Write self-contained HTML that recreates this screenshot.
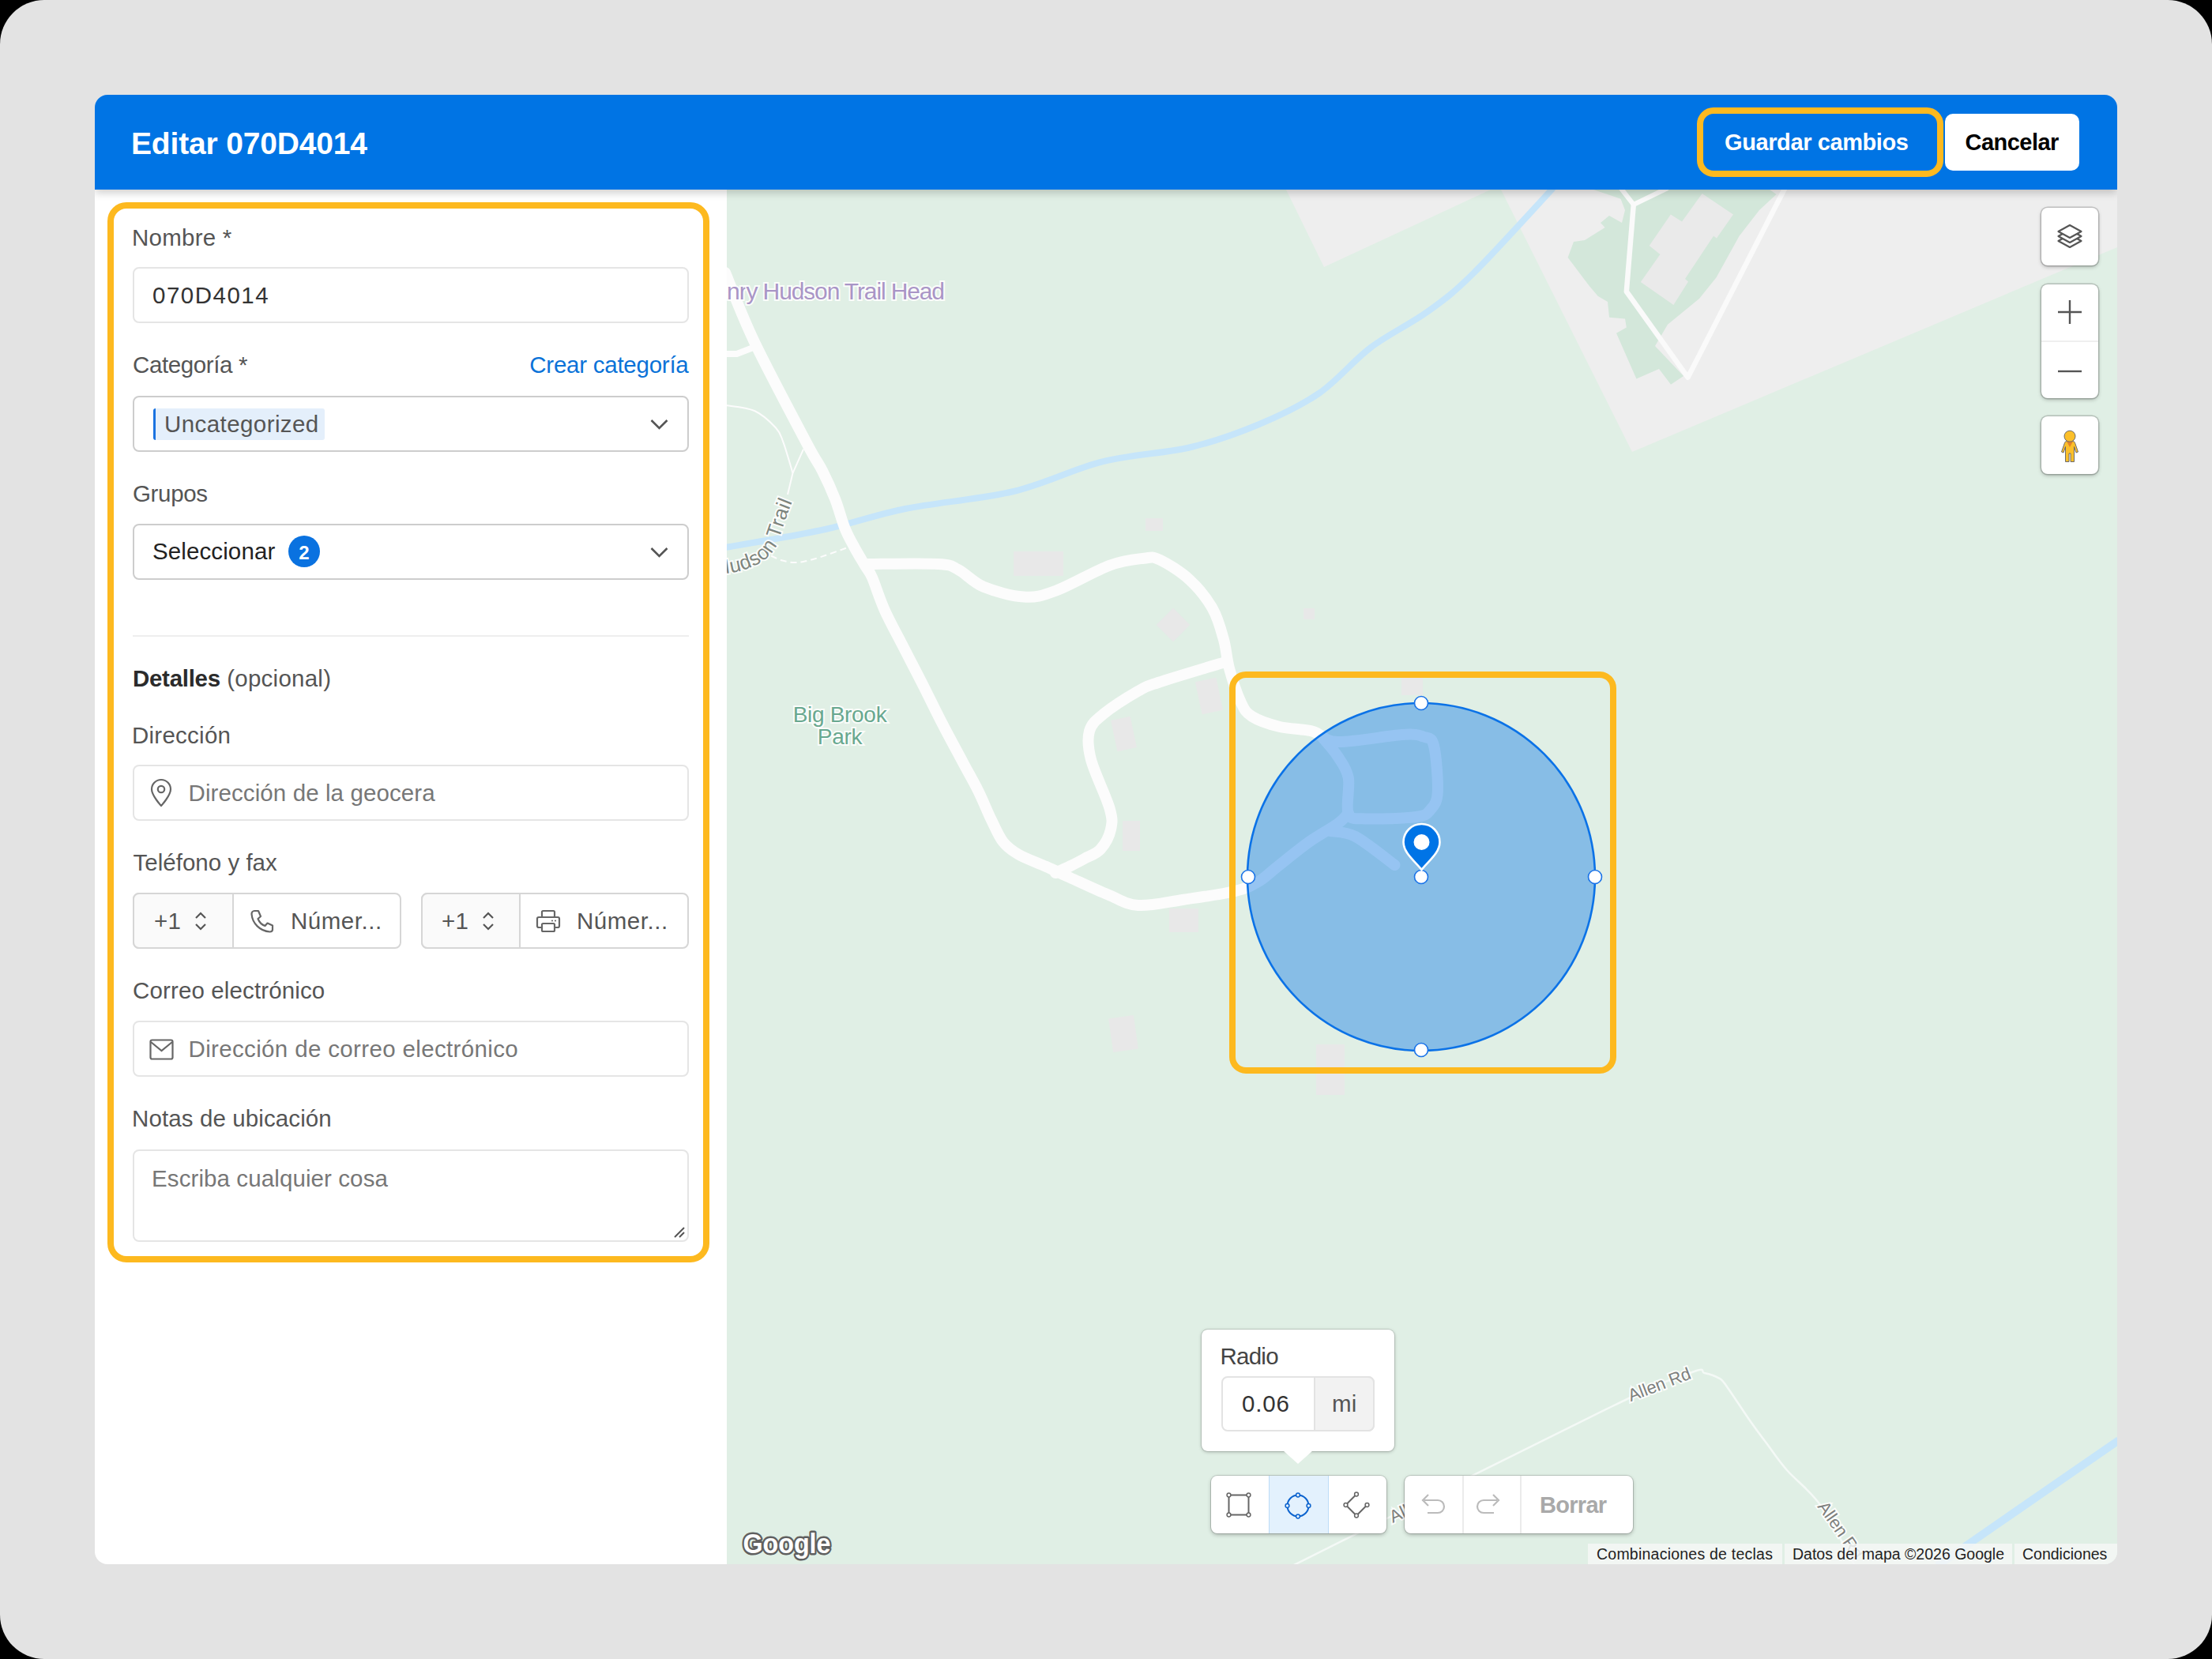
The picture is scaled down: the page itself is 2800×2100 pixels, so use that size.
<!DOCTYPE html>
<html><head><meta charset="utf-8"><style>
html,body{margin:0;padding:0;width:2800px;height:2100px;overflow:hidden;background:#000;}
body{font-family:"Liberation Sans",sans-serif;}
.frame{position:absolute;left:0;top:0;width:2800px;height:2100px;border-radius:56px;background:#e3e3e3;overflow:hidden;}
.dlg{position:absolute;left:120px;top:120px;width:2560px;height:1860px;border-radius:16px;background:#fff;overflow:hidden;}
.inner{position:absolute;left:-120px;top:-120px;width:2800px;height:2100px;}
.t{position:absolute;white-space:nowrap;}
</style></head><body>
<div class="frame">
<div class="dlg"><div class="inner">
<svg style="position:absolute;left:920px;top:240px" width="1760" height="1740" viewBox="920 240 1760 1740"><rect x="920" y="240" width="1760" height="1740" fill="#e0efe5"/><polygon points="1628,240 1676,338 1887,240" fill="#eeeeee"/><polygon points="1900,240 2066,572 2680,313 2680,240" fill="#eeeeee"/><polygon points="2017,240 2051.5,251.7 2057,266 2053,282 2037,273 2026,282 2031.6,288 2006,304 1992,306 1984.6,326 2011.8,362 2022.6,374.7 2035,382 2037,401.8 2057,403.6 2058.8,414.4 2046,421.7 2071.4,479.5 2100,467 2115,486.8 2131,476 2095,438 2111,410.8 2151,378 2172.7,351 2201.6,298.7 2227,266 2248.6,246 2240,240" fill="#d3e7da"/><polygon points="2154.6,245 2194,271.6 2173,301.6 2169,298.7 2133,353 2137,356.6 2118.4,386 2076.8,357 2101.4,322 2087.7,311 2114.8,271.6 2129,280.6" fill="#eaeaea"/><path d="M2051.5 238 L2067.8 259 L2111 238" fill="none" stroke="#fafafa" stroke-width="6" stroke-linejoin="round"/><path d="M2067.8 259 L2058.8 369 L2136.5 477.7 L2259.5 238" fill="none" stroke="#fafafa" stroke-width="6.5" stroke-linejoin="round"/><path d="M918 693 C939.1 689.2 1006.7 678.2 1044.7 670 C1082.7 661.8 1106.3 652.0 1146 644 C1185.7 636.0 1241.4 631.9 1283 622 C1324.6 612.1 1358.1 593.7 1395.5 584.4 C1432.9 575.1 1474.5 573.9 1507.6 566 C1540.7 558.1 1566.9 548.4 1594 537 C1621.1 525.6 1646.5 513.8 1670 497.6 C1693.5 481.4 1712.2 457.2 1735 440 C1757.8 422.8 1785.3 410.3 1807 394.6 C1828.7 378.9 1838.5 372.1 1865 346 C1891.5 319.9 1949.2 256.0 1966 238" fill="none" stroke="#c6e5fa" stroke-width="8" stroke-linejoin="round"/><path d="M2452 1982 L2682 1823" fill="none" stroke="#c6e5fa" stroke-width="10"/><rect x="1283" y="698" width="63" height="31" fill="#e8e8e8" transform="rotate(0 1314.5 713.5)"/><rect x="1450" y="656" width="22" height="16" fill="#e8e8e8" transform="rotate(0 1461.0 664.0)"/><rect x="1650" y="770" width="14" height="14" fill="#e8e8e8" transform="rotate(0 1657.0 777.0)"/><rect x="1410" y="909" width="25" height="40" fill="#e8e8e8" transform="rotate(-12 1422.5 929.0)"/><rect x="1517" y="860" width="27" height="42" fill="#e8e8e8" transform="rotate(-12 1530.5 881.0)"/><rect x="1421" y="1039" width="22" height="38" fill="#e8e8e8" transform="rotate(0 1432.0 1058.0)"/><rect x="1480" y="1150" width="37" height="30" fill="#e8e8e8" transform="rotate(0 1498.5 1165.0)"/><rect x="1406" y="1287" width="32" height="43" fill="#e8e8e8" transform="rotate(-8 1422.0 1308.5)"/><rect x="1666" y="1322" width="36" height="64" fill="#e8e8e8" transform="rotate(0 1684.0 1354.0)"/><rect x="1774" y="858" width="27" height="22" fill="#e8e8e8" transform="rotate(0 1787.5 869.0)"/><rect x="1470" y="776" width="30" height="30" fill="#e8e8e8" transform="rotate(45 1485 791)"/><path d="M918 345 C924.2 359.7 937.9 397.2 955 433 C972.1 468.8 1006.3 532.8 1020.6 560 C1034.9 587.2 1034.9 584.0 1041 596 C1047.1 608.0 1052.6 620.2 1057.3 632.3 C1062.0 644.4 1065.4 658.5 1069.4 668.5 C1073.4 678.5 1077.1 684.7 1081.4 692.6 C1085.7 700.5 1091.2 709.6 1095 716 C1098.8 722.4 1099.9 721.6 1104 731 C1108.1 740.4 1113.1 757.4 1119.8 772.3 C1126.5 787.2 1136.2 804.5 1144.4 820.6 C1152.6 836.7 1161.1 852.7 1169.2 868.8 C1177.3 884.9 1185.0 900.9 1193.3 917 C1201.6 933.1 1211.5 951.1 1219 965.2 C1226.5 979.3 1232.4 989.3 1238.4 1001.4 C1244.4 1013.5 1249.5 1026.8 1254.8 1037.6 C1260.1 1048.4 1264.1 1058.6 1270 1066 C1275.9 1073.4 1280.9 1076.8 1290 1082 C1299.1 1087.2 1313.7 1092.2 1324.4 1097 C1335.2 1101.8 1341.5 1105.1 1354.5 1111 C1367.5 1116.9 1388.3 1126.8 1402.7 1132.6 C1417.1 1138.4 1424.7 1145.0 1440.7 1146 C1456.7 1147.0 1478.0 1141.7 1498.5 1138.7 C1519.0 1135.7 1547.7 1131.9 1563.6 1128 C1579.5 1124.1 1585.0 1120.6 1593.8 1115.5 C1602.6 1110.4 1605.9 1105.8 1616.4 1097.5 C1626.9 1089.2 1644.2 1074.9 1657 1065.8 C1669.8 1056.7 1684.7 1049.0 1693 1043 C1701.3 1037.0 1704.5 1031.9 1706.8 1029.7" fill="none" stroke="#fcfcfc" stroke-width="14" stroke-linejoin="round" stroke-linecap="round"/><path d="M1099 714 C1113.8 714.0 1168.6 712.8 1187.6 714 C1206.6 715.2 1203.3 716.2 1212.9 721 C1222.5 725.8 1231.2 737.0 1245 742.8 C1258.8 748.5 1280.9 754.6 1296 755.5 C1311.1 756.4 1317.7 754.6 1335.8 748 C1353.9 741.4 1385.8 722.6 1404.5 715.7 C1423.2 708.8 1437.5 707.9 1448 706.7 C1458.5 705.5 1458.2 704.0 1467.8 708.5 C1477.4 713.0 1494.5 723.5 1505.7 733.8 C1516.9 744.0 1527.5 757.4 1534.7 770 C1541.9 782.6 1545.5 797.0 1549 809.7 C1552.5 822.4 1552.4 832.8 1556 846 C1559.6 859.2 1566.0 878.8 1570.8 889 C1575.6 899.2 1576.8 901.8 1585 907 C1593.2 912.2 1607.2 916.9 1620 920 C1632.8 923.1 1649.4 922.5 1661.6 925.7 C1673.8 928.9 1674.2 938.3 1693 939 C1711.8 939.7 1756.5 931.1 1774.6 930 C1792.7 928.9 1795.0 930.2 1801.7 932.5 C1808.4 934.8 1812.0 932.1 1815 943.8 C1818.0 955.5 1820.5 989.0 1819.8 1002.5 C1819.1 1016.0 1815.2 1019.8 1810.7 1025 C1806.2 1030.2 1806.3 1032.1 1792.7 1034 C1779.1 1035.9 1743.3 1037.1 1729 1036.4 C1714.7 1035.7 1710.5 1038.4 1706.8 1029.7 C1703.1 1021.1 1709.1 996.6 1706.8 984.5 C1704.5 972.4 1698.3 965.3 1693 957 C1687.7 948.7 1678.0 938.4 1675 934.7" fill="none" stroke="#fcfcfc" stroke-width="14" stroke-linejoin="round" stroke-linecap="round"/><path d="M1549 838.6 C1535.2 842.8 1484.0 858.0 1466 864 C1448.0 870.0 1452.2 868.2 1440.7 874.8 C1429.2 881.4 1407.3 895.3 1397 903.7 C1386.7 912.1 1381.7 915.8 1379 925.4 C1376.3 935.0 1376.8 945.3 1381 961.6 C1385.2 977.9 1400.3 1008.3 1404.5 1023 C1408.7 1037.7 1407.9 1041.3 1406 1050 C1404.1 1058.7 1398.6 1068.8 1393 1075 C1387.4 1081.2 1379.0 1083.4 1372.6 1087 C1366.2 1090.6 1360.6 1093.4 1354.5 1096.4 C1348.4 1099.4 1339.1 1103.6 1336 1105" fill="none" stroke="#fcfcfc" stroke-width="14" stroke-linejoin="round" stroke-linecap="round"/><path d="M1684 1052 C1689.3 1053.2 1702.2 1051.8 1715.8 1059 C1729.4 1066.2 1757.2 1089.0 1765.5 1095" fill="none" stroke="#fcfcfc" stroke-width="14" stroke-linejoin="round" stroke-linecap="round"/><path d="M918 448 L932.6 448 L952 440.5" fill="none" stroke="#fcfcfc" stroke-width="8"/><path d="M918 512.9 C924.2 514.1 944.3 515.2 955 520 C965.7 524.8 975.9 534.9 982 541.5 C988.1 548.1 987.8 550.1 991.4 559.6 C995.0 569.1 1001.5 592.3 1003.5 598.8" fill="none" stroke="#fcfcfc" stroke-width="2"/><path d="M1017 568.6 L1003.5 598.8 L997 626" fill="none" stroke="#fcfcfc" stroke-width="2"/><path d="M976 703.5 C978.4 704.5 985.0 708.1 990.4 709.5 C995.8 710.9 1001.5 712.4 1008.5 712 C1015.5 711.6 1021.3 710.3 1032.6 707 C1043.8 703.7 1068.8 694.5 1076 692" fill="none" stroke="#fcfcfc" stroke-width="2" stroke-dasharray="8 5"/><path d="M1636 1982 C1703.3 1948.4 1955.7 1821.3 2040 1780.5 C2124.3 1739.7 2122.4 1744.1 2142 1737 C2161.6 1729.9 2151.9 1736.8 2157.5 1738 C2163.1 1739.2 2171.1 1741.8 2175.6 1744.4 C2180.1 1747.0 2177.9 1744.1 2184.7 1753.4 C2191.5 1762.7 2207.6 1787.6 2216.3 1800 C2225.0 1812.4 2229.4 1817.8 2237 1828 C2244.6 1838.2 2250.7 1848.0 2262 1861 C2273.3 1874.0 2290.7 1885.8 2305 1906 C2319.3 1926.2 2340.8 1969.3 2348 1982" fill="none" stroke="#f4f9f6" stroke-width="2.5"/><text x="884" y="378.7" font-size="30" font-family="Liberation Sans" font-weight="400" fill="#a995c6" stroke="#fff" stroke-width="4" stroke-opacity="0.85" paint-order="stroke" text-anchor="start" letter-spacing="0" textLength="312" lengthAdjust="spacing">Henry Hudson Trail Head</text><text x="1063" y="914" font-size="28" font-family="Liberation Sans" font-weight="400" fill="#68a88f" stroke="#fff" stroke-width="4" stroke-opacity="0.85" paint-order="stroke" text-anchor="middle" letter-spacing="-0.3">Big Brook</text><text x="1063" y="941.7" font-size="28" font-family="Liberation Sans" font-weight="400" fill="#68a88f" stroke="#fff" stroke-width="4" stroke-opacity="0.85" paint-order="stroke" text-anchor="middle" letter-spacing="-0.3">Park</text><path id="htp" d="M880.7 730.5 C884.1 730.1 892.9 729.4 900.9 728.4 C908.9 727.4 921.3 725.8 928.7 724.4 C936.1 723.0 939.7 722.1 945.2 720.1 C950.7 718.1 957.0 715.4 961.9 712.4 C966.8 709.4 971.2 705.9 974.7 702.2 C978.2 698.5 981.0 694.5 983.2 690.4 C985.4 686.3 986.1 682.1 987.7 677.4 C989.3 672.7 991.1 667.4 992.8 662.4 C994.5 657.4 996.2 652.2 997.9 647.6 C999.6 643.0 1002.1 636.9 1003.0 634.7" fill="none"/><text font-size="25.5" font-family="Liberation Sans" fill="#7d847d" stroke="#fff" stroke-width="4" stroke-opacity="0.85" paint-order="stroke" letter-spacing="0.4"><textPath href="#htp" startOffset="100%" text-anchor="end">Hudson Trail</textPath></text><text x="2142" y="1744.5" font-size="22" font-family="Liberation Sans" font-weight="400" fill="#7d7f7d" stroke="#fff" stroke-width="4" stroke-opacity="0.85" paint-order="stroke" text-anchor="end" letter-spacing="0" transform="rotate(-21 2142 1744.5)">Allen Rd</text><text x="2300" y="1907" font-size="22" font-family="Liberation Sans" font-weight="400" fill="#7d7f7d" stroke="#fff" stroke-width="4" stroke-opacity="0.85" paint-order="stroke" text-anchor="start" letter-spacing="0" transform="rotate(55 2300 1907)">Allen Rd</text><text x="1763" y="1928" font-size="22" font-family="Liberation Sans" font-weight="400" fill="#7d7f7d" stroke="#fff" stroke-width="4" stroke-opacity="0.85" paint-order="stroke" text-anchor="start" letter-spacing="0" transform="rotate(-25 1763 1928)">Allen Rd</text><circle cx="1799" cy="1110" r="220" fill="#1a80e6" fill-opacity="0.45" stroke="#0b72e7" stroke-width="2.6"/><rect x="1560" y="854" width="482" height="501" rx="17" fill="none" stroke="#fdb91f" stroke-width="8"/><circle cx="1799" cy="890" r="8.5" fill="#fff" stroke="#1a73e8" stroke-width="1.6"/><circle cx="1799" cy="1329" r="8.5" fill="#fff" stroke="#1a73e8" stroke-width="1.6"/><circle cx="1580" cy="1110" r="8.5" fill="#fff" stroke="#1a73e8" stroke-width="1.6"/><circle cx="2019" cy="1110" r="8.5" fill="#fff" stroke="#1a73e8" stroke-width="1.6"/><circle cx="1799" cy="1110" r="8.5" fill="#fff" stroke="#1a73e8" stroke-width="1.6"/><path d="M1799.5 1101 C1792 1091 1776.5 1080 1776.5 1066 A23 23 0 0 1 1822.5 1066 C1822.5 1080 1807 1091 1799.5 1101 Z" fill="#0074e6" stroke="#fff" stroke-width="2.6"/><circle cx="1799.5" cy="1066" r="10" fill="#fff"/><text x="940.5" y="1966" font-size="35" font-family="Liberation Sans" font-weight="700" fill="#fff" stroke="#5f5f5f" stroke-width="5" stroke-linejoin="round" paint-order="stroke" textLength="111" lengthAdjust="spacingAndGlyphs">Google</text></svg>
<div style="position:absolute;left:2584px;top:263px;width:72px;height:73px;box-sizing:border-box;background:#fff;border-radius:8px;box-shadow:0 0 0 1.5px rgba(0,0,0,0.17),0 2px 5px rgba(0,0,0,0.25);"></div><svg style="position:absolute;left:2604px;top:283px;overflow:visible" width="32" height="32" viewBox="0 0 32 32"><path d="M16 14 L30.5 22 L16 30 L1.5 22 Z" fill="#fff" stroke="#555" stroke-width="2.2" stroke-linejoin="round"/><path d="M16 8 L30.5 16 L16 24 L1.5 16 Z" fill="#fff" stroke="#555" stroke-width="2.2" stroke-linejoin="round"/><path d="M16 2 L30.5 10 L16 18 L1.5 10 Z" fill="#fff" stroke="#555" stroke-width="2.2" stroke-linejoin="round"/></svg><div style="position:absolute;left:2584px;top:360px;width:72px;height:144px;box-sizing:border-box;background:#fff;border-radius:8px;box-shadow:0 0 0 1.5px rgba(0,0,0,0.17),0 2px 5px rgba(0,0,0,0.25);"></div><div style="position:absolute;left:2584px;top:431px;width:72px;height:2px;box-sizing:border-box;background:#efefef;"></div><svg style="position:absolute;left:2604px;top:376px;overflow:visible" width="32" height="40" viewBox="0 0 32 40"><path d="M16 4 L16 34 M1 19 L31 19" stroke="#555" stroke-width="2.4"/></svg><svg style="position:absolute;left:2604px;top:455px;overflow:visible" width="32" height="30" viewBox="0 0 32 30"><path d="M1 15 L31 15" stroke="#555" stroke-width="2.4"/></svg><div style="position:absolute;left:2584px;top:527px;width:72px;height:73px;box-sizing:border-box;background:#fff;border-radius:8px;box-shadow:0 0 0 1.5px rgba(0,0,0,0.17),0 2px 5px rgba(0,0,0,0.25);"></div><svg style="position:absolute;left:2604px;top:544px;overflow:visible" width="32" height="44" viewBox="0 0 32 44"><path d="M9.5 16.5 Q10 14.5 12.5 14.5 L19.5 14.5 Q22 14.5 22.5 16.5 L26.5 28 L24 29 L21.5 21.5 L21.5 40.5 L17 40.5 L17 30 L15 30 L15 40.5 L10.5 40.5 L10.5 21.5 L8 29 L5.5 28 Z" fill="#fbbf2a" stroke="#5c5f6a" stroke-width="0.9" stroke-linejoin="round"/><path d="M12 14.8 L16 22 L20 14.8 Z" fill="#e3832a"/><circle cx="16" cy="8.2" r="7" fill="#fbbf2a" stroke="#5c5f6a" stroke-width="0.9"/></svg><div style="position:absolute;left:1521px;top:1683px;width:244px;height:154px;background:#fff;border-radius:8px;box-shadow:0 0 0 1px rgba(0,0,0,0.1),0 1px 4px rgba(0,0,0,0.25);"></div><svg style="position:absolute;left:1624px;top:1836px;overflow:visible" width="38" height="18" viewBox="0 0 38 18"><path d="M0 0 L19 17 L38 0 Z" fill="#fff"/></svg><div class="t" style="left:1544.5px;top:1701.5px;font-size:29.5px;line-height:29.5px;color:#444;font-weight:400;letter-spacing:-0.75px;">Radio</div><div style="position:absolute;left:1546px;top:1742px;width:194px;height:70px;box-sizing:border-box;border:2px solid #e3e3e3;border-radius:8px;background:#fff;"></div><div style="position:absolute;left:1663px;top:1742px;width:77px;height:70px;box-sizing:border-box;border:2px solid #e3e3e3;border-left:2px solid #e3e3e3;border-radius:0 8px 8px 0;background:#f2f2f2;"></div><div class="t" style="left:1572px;top:1762.0px;font-size:29.5px;line-height:29.5px;color:#333;font-weight:400;letter-spacing:0.8px;">0.06</div><div class="t" style="left:1686px;top:1762.0px;font-size:29.5px;line-height:29.5px;color:#555;font-weight:400;letter-spacing:0.25px;">mi</div><div style="position:absolute;left:1533px;top:1868px;width:222px;height:73px;box-sizing:border-box;background:#fff;border-radius:8px;box-shadow:0 0 0 1px rgba(0,0,0,0.15),0 2px 5px rgba(0,0,0,0.25);"></div><div style="position:absolute;left:1606px;top:1868px;width:76px;height:73px;box-sizing:border-box;background:#e3f1fd;border-left:1px solid #bcdcf7;border-right:1px solid #bcdcf7;"></div><svg style="position:absolute;left:1551px;top:1888px;overflow:visible" width="34" height="34" viewBox="0 0 34 34"><rect x="4.5" y="4.5" width="25" height="25" fill="none" stroke="#666" stroke-width="2"/><circle cx="4.5" cy="4.5" r="2.4" fill="#fff" stroke="#666" stroke-width="1.5"/><circle cx="29.5" cy="4.5" r="2.4" fill="#fff" stroke="#666" stroke-width="1.5"/><circle cx="4.5" cy="29.5" r="2.4" fill="#fff" stroke="#666" stroke-width="1.5"/><circle cx="29.5" cy="29.5" r="2.4" fill="#fff" stroke="#666" stroke-width="1.5"/></svg><svg style="position:absolute;left:1626px;top:1889px;overflow:visible" width="34" height="34" viewBox="0 0 34 34"><circle cx="17" cy="17" r="13.5" fill="none" stroke="#0b63ce" stroke-width="2"/><circle cx="17" cy="3.5" r="2.4" fill="#e3f1fd" stroke="#0b63ce" stroke-width="1.5"/><circle cx="17" cy="30.5" r="2.4" fill="#e3f1fd" stroke="#0b63ce" stroke-width="1.5"/><circle cx="3.5" cy="17" r="2.4" fill="#e3f1fd" stroke="#0b63ce" stroke-width="1.5"/><circle cx="30.5" cy="17" r="2.4" fill="#e3f1fd" stroke="#0b63ce" stroke-width="1.5"/></svg><svg style="position:absolute;left:1700px;top:1888px;overflow:visible" width="34" height="34" viewBox="0 0 34 34"><path d="M17 3.5 L3.5 17 L17 30.5 L30.5 17" fill="none" stroke="#666" stroke-width="2"/><circle cx="17" cy="3.5" r="2.4" fill="#fff" stroke="#666" stroke-width="1.5"/><circle cx="3.5" cy="17" r="2.4" fill="#fff" stroke="#666" stroke-width="1.5"/><circle cx="17" cy="30.5" r="2.4" fill="#fff" stroke="#666" stroke-width="1.5"/><circle cx="30.5" cy="17" r="2.4" fill="#fff" stroke="#666" stroke-width="1.5"/></svg><div style="position:absolute;left:1778px;top:1868px;width:289px;height:73px;box-sizing:border-box;background:#fff;border-radius:8px;box-shadow:0 0 0 1px rgba(0,0,0,0.15),0 2px 5px rgba(0,0,0,0.25);"></div><div style="position:absolute;left:1851px;top:1868px;width:1.5px;height:73px;box-sizing:border-box;background:#ebebeb;"></div><div style="position:absolute;left:1924px;top:1868px;width:1.5px;height:73px;box-sizing:border-box;background:#ebebeb;"></div><svg style="position:absolute;left:1795px;top:1889px;overflow:visible" width="34" height="30" viewBox="0 0 34 30"><path d="M8 10 L25 10 A8 8 0 0 1 25 26 L12 26" fill="none" stroke="#bbb" stroke-width="2.2"/><path d="M13 3 L6 10 L13 17" fill="none" stroke="#bbb" stroke-width="2.2"/></svg><svg style="position:absolute;left:1869px;top:1889px;overflow:visible" width="34" height="30" viewBox="0 0 34 30"><path d="M26 10 L9 10 A8 8 0 0 0 9 26 L22 26" fill="none" stroke="#bbb" stroke-width="2.2"/><path d="M21 3 L28 10 L21 17" fill="none" stroke="#bbb" stroke-width="2.2"/></svg><div class="t" style="left:1949px;top:1890.9px;font-size:29px;line-height:29px;color:#a9a9a9;font-weight:700;letter-spacing:-0.7px;">Borrar</div><div style="position:absolute;left:2010px;top:1954px;width:670px;height:26px;box-sizing:border-box;background:rgba(245,247,246,0.85);"></div><div style="position:absolute;left:2256px;top:1954px;width:3px;height:26px;box-sizing:border-box;background:#e0efe5;"></div><div style="position:absolute;left:2547px;top:1954px;width:3px;height:26px;box-sizing:border-box;background:#e0efe5;"></div><div class="t" style="left:2021px;top:1958.0px;font-size:19.5px;line-height:19.5px;color:#222;font-weight:400;letter-spacing:0.23px;">Combinaciones de teclas</div><div class="t" style="left:2269px;top:1958.0px;font-size:19.5px;line-height:19.5px;color:#222;font-weight:400;letter-spacing:0px;">Datos del mapa ©2026 Google</div><div class="t" style="left:2560px;top:1958.0px;font-size:19.5px;line-height:19.5px;color:#222;font-weight:400;letter-spacing:0px;">Condiciones</div>
<div style="position:absolute;left:136px;top:256px;width:762px;height:1342px;box-sizing:border-box;border:8px solid #fdb91f;border-radius:24px;"></div><div class="t" style="left:167px;top:285.5px;font-size:29.5px;line-height:29.5px;color:#555;font-weight:400;letter-spacing:0.25px;">Nombre *</div><div style="position:absolute;left:168px;top:338px;width:704px;height:71px;box-sizing:border-box;border:2px solid #e5e5e5;border-radius:8px;background:#fff;"></div><div class="t" style="left:193px;top:359.0px;font-size:29.5px;line-height:29.5px;color:#333;font-weight:400;letter-spacing:1.5px;">070D4014</div><div class="t" style="left:168px;top:446.5px;font-size:29.5px;line-height:29.5px;color:#555;font-weight:400;letter-spacing:-0.38px;">Categoría *</div><div class="t" style="left:871.5px;top:446.5px;font-size:29.5px;line-height:29.5px;color:#0a72d8;font-weight:400;letter-spacing:-0.25px;transform:translateX(-100%);">Crear categoría</div><div style="position:absolute;left:168px;top:501px;width:704px;height:71px;box-sizing:border-box;border:2px solid #cdcdcd;border-radius:8px;background:#fff;"></div><div style="position:absolute;left:194px;top:517px;width:217px;height:40px;box-sizing:border-box;background:#e4effb;border-radius:3px;border-left:3px solid #1a73e0;"></div><div class="t" style="left:208px;top:522.0px;font-size:29.5px;line-height:29.5px;color:#555;font-weight:400;letter-spacing:0.42px;">Uncategorized</div><div class="t" style="left:168px;top:610.0px;font-size:29.5px;line-height:29.5px;color:#555;font-weight:400;letter-spacing:-0.35px;">Grupos</div><div style="position:absolute;left:168px;top:663px;width:704px;height:71px;box-sizing:border-box;border:2px solid #cdcdcd;border-radius:8px;background:#fff;"></div><div class="t" style="left:193px;top:683.0px;font-size:29.5px;line-height:29.5px;color:#222;font-weight:400;letter-spacing:0.11px;">Seleccionar</div><div style="position:absolute;left:365px;top:678px;width:40px;height:40px;box-sizing:border-box;background:#0a72e0;border-radius:50%;"></div><div class="t" style="left:385px;top:687.7px;font-size:24px;line-height:24px;color:#fff;font-weight:700;letter-spacing:0px;transform:translateX(-50%);">2</div><svg style="position:absolute;left:822px;top:529px;overflow:visible" width="24" height="16" viewBox="0 0 24 16"><path d="M2.5 3 L12.5 13 L22.5 3" fill="none" stroke="#555" stroke-width="2.6"/></svg><svg style="position:absolute;left:822px;top:691px;overflow:visible" width="24" height="16" viewBox="0 0 24 16"><path d="M2.5 3 L12.5 13 L22.5 3" fill="none" stroke="#555" stroke-width="2.6"/></svg><div style="position:absolute;left:168px;top:804px;width:704px;height:2px;box-sizing:border-box;background:#eeeeee;"></div><div class="t" style="left:168px;top:844.0px;font-size:29.5px;line-height:29.5px;color:#555;font-weight:400;letter-spacing:0.25px;"><b style="color:#2b2b2b;letter-spacing:-0.3px">Detalles</b> (opcional)</div><div class="t" style="left:167px;top:916.0px;font-size:29.5px;line-height:29.5px;color:#555;font-weight:400;letter-spacing:0.25px;">Dirección</div><div style="position:absolute;left:168px;top:968px;width:704px;height:71px;box-sizing:border-box;border:2px solid #e5e5e5;border-radius:8px;background:#fff;"></div><div class="t" style="left:238.5px;top:989.0px;font-size:29.5px;line-height:29.5px;color:#777;font-weight:400;letter-spacing:0.1px;">Dirección de la geocera</div><svg style="position:absolute;left:189px;top:986px;overflow:visible" width="30" height="36" viewBox="0 0 30 36"><path d="M15 34 C15 34 3 21 3 13 A12 12 0 0 1 27 13 C27 21 15 34 15 34 Z" fill="none" stroke="#666" stroke-width="2.2" stroke-linejoin="round"/><circle cx="15" cy="13" r="4.2" fill="none" stroke="#666" stroke-width="2.2"/></svg><div class="t" style="left:168.5px;top:1077.0px;font-size:29.5px;line-height:29.5px;color:#555;font-weight:400;letter-spacing:0.02px;">Teléfono y fax</div><div style="position:absolute;left:168px;top:1130px;width:340px;height:71px;box-sizing:border-box;border:2px solid #d6d6d6;border-radius:8px;background:#fff;"></div><div style="position:absolute;left:168px;top:1130px;width:128px;height:71px;box-sizing:border-box;border:2px solid #d6d6d6;border-radius:8px 0 0 8px;background:#fafafa;"></div><div style="position:absolute;left:533px;top:1130px;width:339px;height:71px;box-sizing:border-box;border:2px solid #d6d6d6;border-radius:8px;background:#fff;"></div><div style="position:absolute;left:533px;top:1130px;width:126px;height:71px;box-sizing:border-box;border:2px solid #d6d6d6;border-radius:8px 0 0 8px;background:#fafafa;"></div><div class="t" style="left:195px;top:1151.0px;font-size:29.5px;line-height:29.5px;color:#555;font-weight:400;letter-spacing:0.25px;">+1</div><div class="t" style="left:559px;top:1151.0px;font-size:29.5px;line-height:29.5px;color:#555;font-weight:400;letter-spacing:0.25px;">+1</div><svg style="position:absolute;left:246px;top:1153px;overflow:visible" width="16" height="26" viewBox="0 0 16 26"><path d="M2 9 L8 3 L14 9 M2 17 L8 23 L14 17" fill="none" stroke="#555" stroke-width="2.2"/></svg><svg style="position:absolute;left:610px;top:1153px;overflow:visible" width="16" height="26" viewBox="0 0 16 26"><path d="M2 9 L8 3 L14 9 M2 17 L8 23 L14 17" fill="none" stroke="#555" stroke-width="2.2"/></svg><svg style="position:absolute;left:316px;top:1150px;overflow:visible" width="32" height="32" viewBox="0 0 32 32"><path d="M6 3 L11 3 L14 10 L10.5 13 C12.5 18 15 20.5 19.5 22 L22.5 18.5 L29 21.5 L29 26.5 C29 28.5 27.5 29.5 25.5 29.5 C13 28.5 3.5 19 2.5 7 C2.5 5 4 3 6 3 Z" fill="none" stroke="#666" stroke-width="2.2" stroke-linejoin="round"/></svg><svg style="position:absolute;left:678px;top:1150px;overflow:visible" width="32" height="32" viewBox="0 0 32 32"><rect x="8" y="3" width="16" height="8" rx="1.5" fill="none" stroke="#666" stroke-width="2.2"/><path d="M8 24 L4 24 Q2 24 2 22 L2 13 Q2 11 4 11 L28 11 Q30 11 30 13 L30 22 Q30 24 28 24 L24 24" fill="none" stroke="#666" stroke-width="2.2"/><rect x="8" y="19" width="16" height="10" rx="1.5" fill="none" stroke="#666" stroke-width="2.2"/><circle cx="21" cy="15.5" r="1.1" fill="#666"/><circle cx="25" cy="15.5" r="1.1" fill="#666"/></svg><div class="t" style="left:368px;top:1151.0px;font-size:29.5px;line-height:29.5px;color:#555;font-weight:400;letter-spacing:0.53px;">Númer...</div><div class="t" style="left:730px;top:1151.0px;font-size:29.5px;line-height:29.5px;color:#555;font-weight:400;letter-spacing:0.53px;">Númer...</div><div class="t" style="left:168px;top:1239.0px;font-size:29.5px;line-height:29.5px;color:#555;font-weight:400;letter-spacing:0.13px;">Correo electrónico</div><div style="position:absolute;left:168px;top:1292px;width:704px;height:71px;box-sizing:border-box;border:2px solid #e5e5e5;border-radius:8px;background:#fff;"></div><svg style="position:absolute;left:189px;top:1315px;overflow:visible" width="32" height="28" viewBox="0 0 32 28"><rect x="1.5" y="1.5" width="28" height="24" rx="2" fill="none" stroke="#666" stroke-width="2.2"/><path d="M2 4 L15.5 15 L29 4" fill="none" stroke="#666" stroke-width="2.2"/></svg><div class="t" style="left:238.5px;top:1313.0px;font-size:29.5px;line-height:29.5px;color:#777;font-weight:400;letter-spacing:0.35px;">Dirección de correo electrónico</div><div class="t" style="left:167px;top:1401.0px;font-size:29.5px;line-height:29.5px;color:#555;font-weight:400;letter-spacing:0.11px;">Notas de ubicación</div><div style="position:absolute;left:168px;top:1455px;width:704px;height:117px;box-sizing:border-box;border:2px solid #e5e5e5;border-radius:8px;background:#fff;"></div><div class="t" style="left:192px;top:1477.0px;font-size:29.5px;line-height:29.5px;color:#777;font-weight:400;letter-spacing:0.1px;">Escriba cualquier cosa</div><svg style="position:absolute;left:853px;top:1553px;overflow:visible" width="14" height="14" viewBox="0 0 14 14"><path d="M1 13 L13 1 M7 13 L13 7" stroke="#555" stroke-width="2"/></svg>
<div style="position:absolute;left:120px;top:120px;width:2560px;height:120px;background:#0074e4;box-shadow:0 4px 10px rgba(0,0,0,0.2);"></div>
<div class="t" style="left:166px;top:161.5px;font-size:39px;line-height:39px;color:#fff;font-weight:700;letter-spacing:-0.17px;">Editar 070D4014</div><div style="position:absolute;left:2148px;top:136px;width:312px;height:88px;box-sizing:border-box;border:8px solid #fdb91f;border-radius:21px;"></div><div class="t" style="left:2183px;top:166.4px;font-size:29px;line-height:29px;color:#fff;font-weight:700;letter-spacing:-0.4px;">Guardar cambios</div><div style="position:absolute;left:2462px;top:144px;width:170px;height:72px;box-sizing:border-box;background:#fff;border-radius:10px;"></div><div class="t" style="left:2487.5px;top:166.4px;font-size:29px;line-height:29px;color:#000;font-weight:700;letter-spacing:-0.53px;">Cancelar</div>
</div></div>
</div>
</body></html>
